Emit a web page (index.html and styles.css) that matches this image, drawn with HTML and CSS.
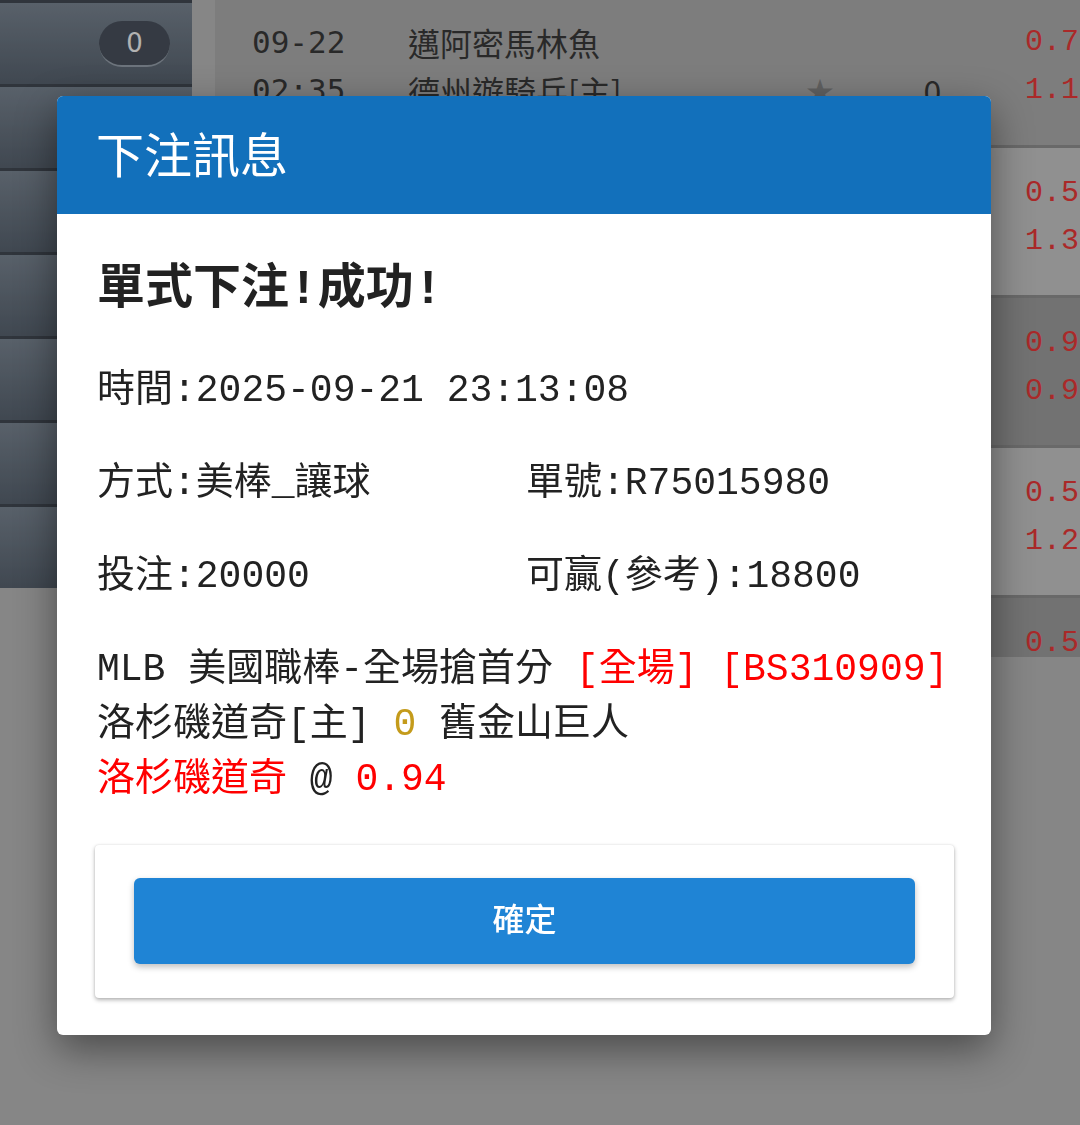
FILE: index.html
```html
<!DOCTYPE html>
<html>
<head>
<meta charset="UTF-8">
<title>下注訊息</title>
<link rel="stylesheet" href="styles.css">
</head>
<body>
	<div class="page">
		<div class="sidebar">
			<div class="side-item"><span class="badge">0</span></div>
			<div class="side-item"></div>
			<div class="side-item"></div>
			<div class="side-item"></div>
			<div class="side-item"></div>
			<div class="side-item"></div>
			<div class="side-item"></div>
		</div>
		<div class="games">
			<div class="game">
				<div class="g-time">09-22<br>02:35</div>
				<div class="g-teams">邁阿密馬林魚<br>德州遊騎兵[主]</div>
				<div class="g-star"><br>★</div>
				<div class="g-line"><br>0</div>
				<div class="g-odds">0.78<br>1.12</div>
			</div>
			<div class="game">
				<div class="g-time">09-22<br>03:10</div>
				<div class="g-teams">坦帕灣光芒<br>多倫多藍鳥[主]</div>
				<div class="g-star"><br>★</div>
				<div class="g-line"><br>0</div>
				<div class="g-odds">0.55<br>1.36</div>
			</div>
			<div class="game">
				<div class="g-time">09-22<br>04:05</div>
				<div class="g-teams">舊金山巨人<br>洛杉磯道奇[主]</div>
				<div class="g-star"><br>★</div>
				<div class="g-line"><br>0</div>
				<div class="g-odds">0.94<br>0.92</div>
			</div>
			<div class="game">
				<div class="g-time">09-22<br>04:10</div>
				<div class="g-teams">芝加哥小熊<br>聖路易紅雀[主]</div>
				<div class="g-star"><br>★</div>
				<div class="g-line"><br>0</div>
				<div class="g-odds">0.58<br>1.25</div>
			</div>
			<div class="game">
				<div class="g-time">09-22<br>07:05</div>
				<div class="g-teams">西雅圖水手<br>休士頓太空人[主]</div>
				<div class="g-star"><br>★</div>
				<div class="g-line"><br>0</div>
				<div class="g-odds">0.52<br>1.40</div>
			</div>
		</div>
	</div>

	<div class="mask"></div>

	<div class="dialog">
		<div class="dialog-head">下注訊息</div>
		<div class="dialog-body">
			<h3 class="result">單式下注!成功!</h3>
			<div class="info">
				<div class="info-line">時間:2025-09-21 23:13:08</div>
				<div class="info-line info-pair">
					<span>方式:美棒_讓球</span>
					<span>單號:R75015980</span>
				</div>
				<div class="info-line info-pair">
					<span>投注:20000</span>
					<span>可贏(參考):18800</span>
				</div>
			</div>
			<div class="match">
				<div>MLB 美國職棒-全場搶首分 <span class="red">[全場]</span> <span class="red">[BS310909]</span></div>
				<div>洛杉磯道奇[主] <span class="gold">0</span> 舊金山巨人</div>
				<div><span class="red">洛杉磯道奇</span> @ <span class="red">0.94</span></div>
			</div>
			<div class="confirm-card">
				<button class="confirm">確定</button>
			</div>
		</div>
	</div>
</body>
</html>
```

FILE: styles.css
```css
html, body {
	margin: 0;
	height: 100%;
	overflow: hidden;
}

body {
	background: #c1c1c1;
	font-family: "Noto Sans CJK TC", "Noto Sans", sans-serif;
	color: #3c3c3c;
}

/* page behind the dialog */

.page {
	display: flex;
	align-items: flex-start;
}

.sidebar {
	width: 192px;
	flex: none;
}

.side-item {
	height: 81px;
	border-top: 3px solid #454d57;
	background: linear-gradient(#7f8b98, #5c6774);
	display: flex;
	align-items: center;
	justify-content: flex-end;
	padding-right: 22px;
}

.badge {
	width: 71px;
	height: 44px;
	border-radius: 23px;
	background: #4c5460;
	border-bottom: 2px solid #9da7b3;
	color: #fff;
	font: 26px "DejaVu Sans", sans-serif;
	display: flex;
	align-items: center;
	justify-content: center;
}

.games {
	flex: 1;
	margin-left: 23px;
	height: 657px;
	overflow: hidden;
}

.game {
	display: grid;
	grid-template-columns: 156px 382px 60px 175px 1fr;
	padding: 21px 0 30px 37px;
	border-top: 3px solid #979797;
	font-size: 32px;
	line-height: 48px;
	white-space: nowrap;
}

.game:first-child {
	border-top: 0;
	padding-top: 18px;
	padding-bottom: 31px;
	background: #b4b4b4;
}

.game:nth-child(even) {
	background: #cfcfcf;
}

.game:nth-child(odd):not(:first-child) {
	background: #a4a4a4;
}

.g-time {
	font-family: "DejaVu Sans Mono", monospace;
	font-size: 31px;
}

.g-star {
	color: #8a8a8a;
	font-size: 28px;
	text-align: center;
}

.g-line {
	text-align: center;
	padding-right: 10px;
}

.g-odds {
	font-family: "Liberation Mono", monospace;
	font-size: 30px;
	color: #f43c3c;
}

/* dialog */

.mask {
	position: fixed;
	top: 0;
	left: 0;
	right: 0;
	bottom: 0;
	background: rgba(0, 0, 0, 0.3);
}

.dialog {
	position: absolute;
	left: 57px;
	top: 96px;
	width: 934px;
	background: #fff;
	border-radius: 6px;
	overflow: hidden;
	box-shadow: 0 14px 40px rgba(0, 0, 0, 0.45);
}

.dialog-head {
	height: 112px;
	background: #1270bb;
	color: #fff;
	font-size: 48px;
	display: flex;
	align-items: center;
	padding: 0 0 6px 39px;
}

.dialog-body {
	padding: 46px 40px 37px;
	font-family: "Liberation Mono", "Noto Sans CJK TC", monospace;
	font-size: 38px;
	line-height: 55px;
	color: #222;
	white-space: nowrap;
}

.result {
	margin: 0;
	font-size: 48px;
	line-height: 60px;
	font-weight: bold;
}

.info {
	margin-top: 43px;
}

.info-line {
	margin-bottom: 38px;
}

.info-pair {
	display: grid;
	grid-template-columns: 429px 1fr;
}

.red {
	color: #f00;
}

.gold {
	color: #c49b1b;
}

.confirm-card {
	margin: 38px -3px 0 -2px;
	padding: 33px 39px 34px;
	border-radius: 4px;
	box-shadow: 0 2px 4px rgba(0, 0, 0, 0.3), 0 0 2px rgba(0, 0, 0, 0.1);
}

.confirm {
	display: block;
	width: 100%;
	height: 86px;
	padding: 0 0 8px;
	border: 0;
	border-radius: 6px;
	background: #1f84d5;
	color: #fff;
	font: 500 32px "Noto Sans CJK TC", sans-serif;
	box-shadow: 0 3px 6px rgba(0, 0, 0, 0.25);
}
```
